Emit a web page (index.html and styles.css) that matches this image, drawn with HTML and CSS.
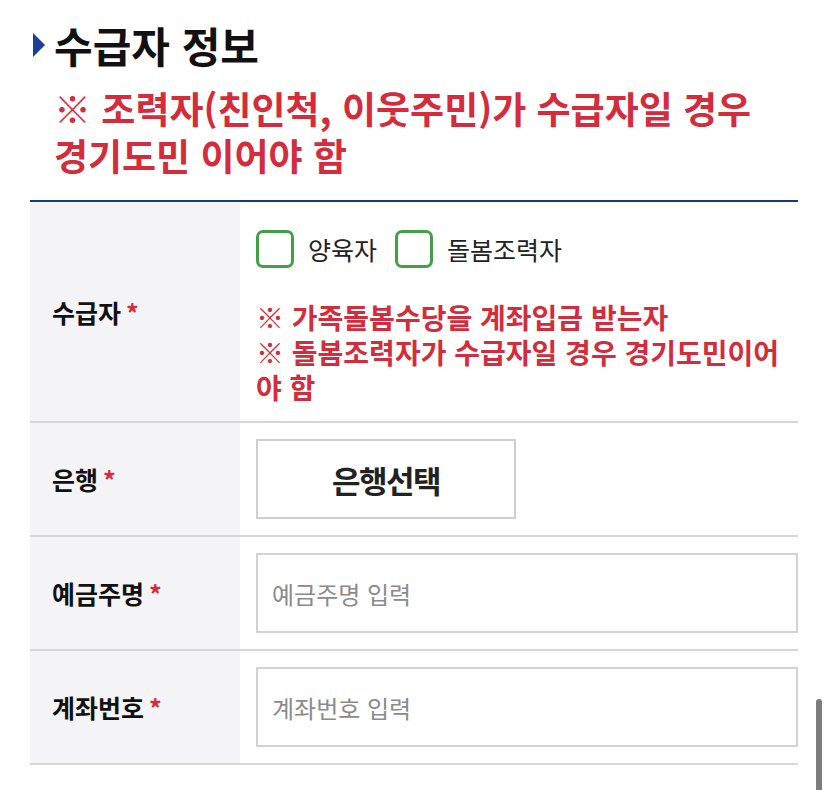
FILE: index.html
```html
<!DOCTYPE html>
<html lang="ko">
<head>
    <meta charset="UTF-8">
    <meta name="viewport" content="width=device-width, initial-scale=1.0">
    <title>수급자 정보</title>
    <link rel="stylesheet" href="styles.css">
</head>
<body>

    <h2 class="sec-title">수급자 정보</h2>
    <p class="notice">※ 조력자(친인척, 이웃주민)가 수급자일 경우<br>경기도민 이어야 함</p>

    <div class="form-table">
        <div class="form-row">
            <div class="label">수급자<span class="req">*</span></div>
            <div class="value value-pad">
                <div class="checks">
                    <label class="chk"><input type="checkbox"><span>양육자</span></label>
                    <label class="chk"><input type="checkbox"><span>돌봄조력자</span></label>
                </div>
                <p class="note">※ 가족돌봄수당을 계좌입금 받는자<br>※ 돌봄조력자가 수급자일 경우 경기도민이어야 함</p>
            </div>
        </div>
        <div class="form-row">
            <div class="label">은행<span class="req">*</span></div>
            <div class="value">
                <button class="bank-btn">은행선택</button>
            </div>
        </div>
        <div class="form-row">
            <div class="label">예금주명<span class="req">*</span></div>
            <div class="value">
                <input type="text" class="txt" placeholder="예금주명 입력">
            </div>
        </div>
        <div class="form-row">
            <div class="label">계좌번호<span class="req">*</span></div>
            <div class="value">
                <input type="text" class="txt" placeholder="계좌번호 입력">
            </div>
        </div>
    </div>

    <div class="scroll-thumb"></div>

</body>
</html>
```

FILE: styles.css
```css
body {
    margin: 0;
    padding: 0 30px;
    font-family: "Noto Sans CJK KR", "Noto Sans", sans-serif;
    color: #111;
    background: #fff;
}
.sec-title {
    display: flex;
    align-items: center;
    gap: 9px;
    margin: 0;
    padding-top: 17px;
    font-size: 42px;
    line-height: 56px;
    font-weight: 700;
}
.sec-title::before {
    content: "";
    width: 0;
    height: 0;
    margin-left: 3px;
    border-left: 12px solid #1c3f94;
    border-top: 12px solid transparent;
    border-bottom: 12px solid transparent;
}
.notice {
    margin: 12px 0 21px;
    padding-left: 24px;
    color: #d42c3c;
    font-size: 37px;
    line-height: 47px;
    font-weight: 700;
}
.form-table {
    border-top: 2px solid #1d3a70;
}
.form-row {
    display: grid;
    grid-template-columns: 210px 1fr;
    border-bottom: 2px solid #d6d6d6;
}
.label {
    display: flex;
    align-items: center;
    padding-left: 22px;
    background: #f4f4f6;
    font-size: 25px;
    font-weight: 700;
}
.req {
    color: #d42c3c;
    margin-left: 5px;
}
.value {
    padding: 16px 0 16px 16px;
}
.value-pad {
    padding-right: 16px;
}
.checks {
    display: flex;
    gap: 18px;
    padding-top: 12px;
}
.chk {
    display: flex;
    align-items: center;
    gap: 14px;
    font-size: 25px;
    color: #222;
}
.chk input {
    appearance: none;
    width: 38px;
    height: 38px;
    margin: 0;
    border: 3px solid #43a047;
    border-radius: 7px;
    background: #fff;
}
.note {
    margin: 32px 0 0;
    color: #d42c3c;
    font-size: 28px;
    line-height: 35px;
    font-weight: 700;
}
.bank-btn {
    display: block;
    width: 260px;
    height: 80px;
    border: 2px solid #cfcfcf;
    background: #fff;
    font-family: inherit;
    font-size: 31px;
    font-weight: 700;
    letter-spacing: -1.5px;
    color: #222;
}
.txt {
    display: block;
    box-sizing: border-box;
    width: 100%;
    height: 80px;
    padding: 0 14px;
    border: 2px solid #d2d2d2;
    font-family: inherit;
    font-size: 24px;
    color: #222;
}
.txt::placeholder {
    color: #8a8a8a;
}
.scroll-thumb {
    position: fixed;
    right: 6px;
    top: 699px;
    width: 6px;
    height: 100px;
    border-radius: 3px;
    background: #7d7d7d;
}
```
